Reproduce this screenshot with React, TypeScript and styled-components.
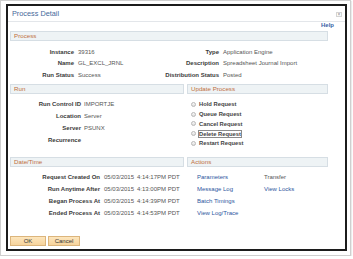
import React from "react";
import styled, { createGlobalStyle } from "styled-components";

const Global = createGlobalStyle`
  html, body { margin: 0; padding: 0; background: #fff; }
  body { font-family: "Liberation Sans", Arial, sans-serif; }
`;

const Frame = styled.div`
  box-sizing: border-box;
  width: 351px;
  height: 256px;
  border: 1px solid #cfcfcf;
  box-shadow: 1px 1px 1px rgba(0, 0, 0, 0.08);
  padding: 3px 3px 4px 5px;
  background: #fff;
`;

const Dialog = styled.div`
  box-sizing: border-box;
  width: 341px;
  height: 247px;
  border: 2px solid #1c1c1c;
  position: relative;
  display: flex;
  flex-direction: column;
  background: #fff;
`;

const TitleBar = styled.div`
  box-sizing: border-box;
  height: 16px;
  border-bottom: 1px solid #e3e6ea;
  padding-left: 4px;
  font-size: 7.3px;
  line-height: 15px;
  color: #46699a;
`;

const Close = styled.div`
  position: absolute;
  top: 6px;
  right: 3px;
  box-sizing: border-box;
  width: 6px;
  height: 5px;
  border: 1px solid #d4d4d4;
  color: #888;
  font-size: 5px;
  line-height: 3px;
  text-align: center;
`;

const HelpRow = styled.div`
  height: 9px;
  padding-right: 11px;
  text-align: right;
  font-size: 6px;
  line-height: 6px;
`;

const Link = styled.span`
  color: #2d56a0;
`;

const HelpLink = styled(Link)`
  font-weight: bold;
  color: #3a62a6;
`;

const Body = styled.div`
  padding: 0 17px 0 2px;
  display: flex;
  flex-direction: column;
  font-size: 6px;
`;

const SectionHeader = styled.div`
  box-sizing: border-box;
  height: 10px;
  border: 1px solid #d6dee4;
  background: #eef3f5;
  padding-left: 3px;
  font-size: 6.2px;
  line-height: 8px;
  color: #bf6f3c;
`;

const ProcessGrid = styled.div`
  margin-top: 5.5px;
  display: grid;
  grid-template-columns: 64px 81px 56px 1fr;
  column-gap: 4px;
  grid-auto-rows: 11.5px;
  line-height: 11.5px;
`;

const Label = styled.div`
  font-weight: bold;
  color: #3a3a3a;
  text-align: right;
  white-space: nowrap;
`;

const Value = styled.div`
  color: #555;
  white-space: nowrap;
`;

const TwoCol = styled.div<{ $top: number }>`
  margin-top: ${(p) => p.$top}px;
  display: grid;
  grid-template-columns: 174px 1fr;
  column-gap: 3px;
`;

const Column = styled.div`
  display: flex;
  flex-direction: column;
`;

const RunGrid = styled.div`
  margin-top: 4px;
  display: grid;
  grid-template-columns: 71px 1fr;
  column-gap: 3px;
  grid-auto-rows: 12px;
  line-height: 12px;
`;

const RadioList = styled.div`
  margin-top: 5.5px;
  padding-left: 4px;
  display: flex;
  flex-direction: column;
`;

const RadioRow = styled.div`
  height: 9.75px;
  display: flex;
  align-items: center;
  gap: 3px;
  font-weight: bold;
  font-size: 5.8px;
`;

const RadioDot = styled.span`
  box-sizing: border-box;
  width: 5px;
  height: 5px;
  border-radius: 50%;
  border: 1px solid #b8b8b8;
  background: linear-gradient(#fafafa, #dcdcdc);
`;

const RadioText = styled.span<{ $focused?: boolean }>`
  line-height: 6px;
  outline: ${(p) => (p.$focused ? "1px solid #8a8a8a" : "none")};
  color: #444;
`;

const DateGrid = styled.div`
  margin-top: 4px;
  display: grid;
  grid-template-columns: 90px 30px auto;
  column-gap: 4px;
  grid-auto-rows: 12px;
  line-height: 12px;
`;

const TimeValue = styled(Value)`
  margin-left: -1px;
`;

const ActionsGrid = styled.div`
  margin-top: 4px;
  padding-left: 10px;
  display: grid;
  grid-template-columns: 67px auto;
  grid-auto-rows: 12px;
  line-height: 12px;
`;

const PlainAction = styled.div`
  color: #555;
`;

const Footer = styled.div`
  margin-top: auto;
  padding: 0 0 3px 2px;
  display: flex;
  gap: 2px;
`;

const Button = styled.div<{ $w: number }>`
  box-sizing: border-box;
  width: ${(p) => p.$w}px;
  height: 10px;
  border: 1px solid #dcb57c;
  background: linear-gradient(#fde6bd, #f6d39c);
  color: #333;
  font-size: 6px;
  line-height: 8px;
  text-align: center;
`;

const processRows: [string, string, string, string][] = [
  ["Instance", "39316", "Type", "Application Engine"],
  ["Name", "GL_EXCL_JRNL", "Description", "Spreadsheet Journal Import"],
  ["Run Status", "Success", "Distribution Status", "Posted"],
];

const runRows: [string, string][] = [
  ["Run Control ID", "IMPORTJE"],
  ["Location", "Server"],
  ["Server", "PSUNX"],
  ["Recurrence", ""],
];

const radios = [
  "Hold Request",
  "Queue Request",
  "Cancel Request",
  "Delete Request",
  "Restart Request",
];

const dateRows: [string, string, string][] = [
  ["Request Created On", "05/03/2015", "4:14:17PM PDT"],
  ["Run Anytime After", "05/03/2015", "4:13:00PM PDT"],
  ["Began Process At", "05/03/2015", "4:14:39PM PDT"],
  ["Ended Process At", "05/03/2015", "4:14:53PM PDT"],
];

export default function App() {
  return (
    <>
      <Global />
      <Frame>
        <Dialog>
          <TitleBar>Process Detail</TitleBar>
          <Close>×</Close>
          <HelpRow>
            <HelpLink>Help</HelpLink>
          </HelpRow>
          <Body>
            <SectionHeader>Process</SectionHeader>
            <ProcessGrid>
              {processRows.map(([l1, v1, l2, v2]) => (
                <React.Fragment key={l1}>
                  <Label>{l1}</Label>
                  <Value>{v1}</Value>
                  <Label>{l2}</Label>
                  <Value>{v2}</Value>
                </React.Fragment>
              ))}
            </ProcessGrid>

            <TwoCol $top={3}>
              <Column>
                <SectionHeader>Run</SectionHeader>
                <RunGrid>
                  {runRows.map(([l, v]) => (
                    <React.Fragment key={l}>
                      <Label>{l}</Label>
                      <Value>{v}</Value>
                    </React.Fragment>
                  ))}
                </RunGrid>
              </Column>
              <Column>
                <SectionHeader>Update Process</SectionHeader>
                <RadioList>
                  {radios.map((r) => (
                    <RadioRow key={r}>
                      <RadioDot />
                      <RadioText $focused={r === "Delete Request"}>{r}</RadioText>
                    </RadioRow>
                  ))}
                </RadioList>
              </Column>
            </TwoCol>

            <TwoCol $top={9}>
              <Column>
                <SectionHeader>Date/Time</SectionHeader>
                <DateGrid>
                  {dateRows.map(([l, d, t]) => (
                    <React.Fragment key={l}>
                      <Label>{l}</Label>
                      <Value>{d}</Value>
                      <TimeValue>{t}</TimeValue>
                    </React.Fragment>
                  ))}
                </DateGrid>
              </Column>
              <Column>
                <SectionHeader>Actions</SectionHeader>
                <ActionsGrid>
                  <Link>Parameters</Link>
                  <PlainAction>Transfer</PlainAction>
                  <Link>Message Log</Link>
                  <Link>View Locks</Link>
                  <Link>Batch Timings</Link>
                  <span />
                  <Link>View Log/Trace</Link>
                  <span />
                </ActionsGrid>
              </Column>
            </TwoCol>
          </Body>
          <Footer>
            <Button $w={36}>OK</Button>
            <Button $w={32}>Cancel</Button>
          </Footer>
        </Dialog>
      </Frame>
    </>
  );
}
